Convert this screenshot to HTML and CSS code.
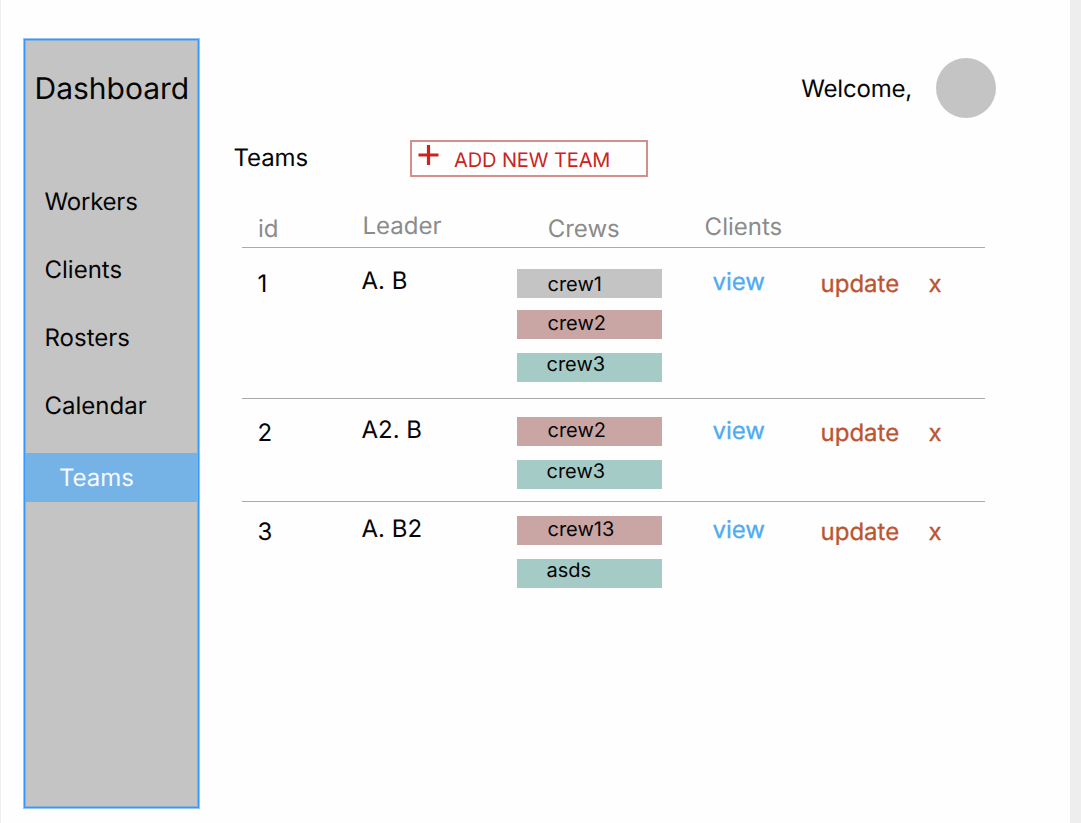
FILE: index.html
```html
<!DOCTYPE html>
<html lang="en">
<head>
<meta charset="utf-8">
<title>Teams</title>
<link rel="stylesheet" href="styles.css">
</head>
<body>
<div class="page">
  <aside class="sidebar">
    <div class="panel">
      <h1 class="brand">Dashboard</h1>
      <nav class="nav">
        <a class="nav-item tight">Workers</a>
        <a class="nav-item">Clients</a>
        <a class="nav-item">Rosters</a>
        <a class="nav-item">Calendar</a>
        <a class="nav-item active">Teams</a>
      </nav>
    </div>
  </aside>
  <main class="main">
    <header class="topbar"><span class="tight">Welcome,</span><span class="avatar"></span></header>
    <div class="toolbar">
      <h2 class="title">Teams</h2>
      <button class="add"><svg class="plus" width="21" height="20" viewBox="0 0 21 20"><path d="M10.5 0V20M0.5 10H20.5" stroke="#cb231d" stroke-width="3.2"/></svg><span>ADD NEW TEAM</span></button>
    </div>
    <section class="table">
      <div class="row head">
        <span class="id">id</span><span class="leader">Leader</span><span class="crews">Crews</span><span class="clients">Clients</span>
      </div>
      <div class="row first">
        <span class="id">1</span><span class="leader">A. B</span>
        <div class="crews"><span class="tag gray">crew1</span><span class="tag rose">crew2</span><span class="tag teal">crew3</span></div>
        <a class="view">view</a><a class="update">update</a><a class="remove">x</a>
      </div>
      <div class="row second">
        <span class="id">2</span><span class="leader">A2. B</span>
        <div class="crews"><span class="tag rose">crew2</span><span class="tag teal">crew3</span></div>
        <a class="view">view</a><a class="update">update</a><a class="remove">x</a>
      </div>
      <div class="row third">
        <span class="id">3</span><span class="leader">A. B2</span>
        <div class="crews"><span class="tag rose">crew13</span><span class="tag teal">asds</span></div>
        <a class="view">view</a><a class="update">update</a><a class="remove">x</a>
      </div>
    </section>
  </main>
</div>
</body>
</html>
```
FILE: styles.css
```css
* { box-sizing: border-box; }
body { margin: 0; background: #eee; font-family: Inter, "Liberation Sans", sans-serif; font-size: 24px; line-height: 30px; color: #050505; text-rendering: geometricPrecision; }
.page { display: flex; width: 1070px; height: 823px; padding: 38px 0 14px 22px; border-left: 1px solid #eee; background: #fefefe; }
.sidebar { width: 177px; height: 771px; border: 1px solid #90c8fc; }
.panel { height: 100%; border: 1px solid #3399fb; background: #c4c4c4; box-shadow: inset 0 0 0 1px #85b2dc; padding: 32px 1px 0 0; }
.brand { margin: 0; padding-left: 9.5px; font-size: 30px; font-weight: 400; line-height: 35px; }
.nav { display: flex; flex-direction: column; padding-top: 61px; }
.nav-item { height: 68px; padding-left: 19.5px; line-height: 68px; }
.tight { letter-spacing: -0.2px; }
.active { height: 49px; margin-top: 13px; padding-left: 34px; line-height: 49px; background: #75b3e7; color: #f4faff; }
.main { width: 785px; padding-top: 20px; }
.topbar { display: flex; align-items: center; justify-content: flex-end; gap: 23.5px; width: 795.5px; height: 60px; line-height: 33px; }
.avatar { width: 60px; height: 60px; border-radius: 50%; background: #c4c4c4; }
.toolbar { display: flex; padding: 22px 0 0 33.5px; height: 79px; }
.title { width: 176.5px; margin: 0; font-size: 24px; font-weight: 400; line-height: 35px; letter-spacing: -0.1px; }
.add { display: flex; width: 238px; height: 37px; padding: 3px 0 0 6px; gap: 15px; border: 2px solid #d58e8c; background: none; color: #cb231d; font: 20px/31px Inter, sans-serif; text-align: left; text-rendering: inherit; letter-spacing: -0.1px; }
.table { width: 743px; margin-left: 42px; }
.row { display: grid; grid-template-columns: 120px 155px 196px 108px 108px 56px; align-items: start; border-bottom: 1px solid #aaa; }
.head { height: 51px; color: #8b8b8b; padding-top: 17px; }
.id { padding-left: 16px; }
.row:not(.head) .leader { margin-left: -0.5px; }
.row:not(.head) .id { padding-left: 15.5px; }
.head .leader { padding-left: 0.5px; margin-top: -3px; }
.head .crews { padding: 0 0 0 30.7px; }
.head .clients { margin: -2px 0 0 -8.4px; }
.first { height: 151px; padding-top: 18px; }
.second { height: 103px; padding-top: 16px; }
.third { height: 100px; padding-top: 12px; border-bottom: 0; }
.row:not(.head) .id, .update, .remove { margin-top: 3px; }
.view { margin: 1px 0 0 -0.5px; color: #4eabf1; }
.update, .remove { margin-left: -0.5px; color: #bc5430; }
.view, .update, .remove { -webkit-text-stroke: 0.3px currentColor; }
div.crews { display: flex; flex-direction: column; gap: 14px; }
.first .crews { padding-top: 3px; }
.second .crews, .third .crews { padding-top: 2px; }
.tag { width: 145px; height: 29px; padding-left: 30.5px; font-size: 20px; }
.gray { background: #c4c4c4; line-height: 31px; margin-bottom: -2px; }
.rose { background: #c9a5a4; line-height: 27px; }
.teal { background: #a5cbc7; line-height: 23px; padding-left: 29.5px; }
```
